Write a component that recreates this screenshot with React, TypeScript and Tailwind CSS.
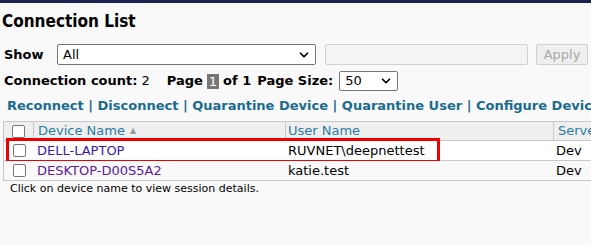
import { ChevronDown } from 'lucide-react';

const font = { fontFamily: '"DejaVu Sans", Verdana, sans-serif' };

function Select({ value, className }: { value: string; className: string }) {
  return (
    <div
      className={`flex items-center justify-between border border-[#767676] rounded-[2px] bg-white pl-[5px] pr-[4px] text-[13px] text-black ${className}`}
    >
      <span>{value}</span>
      <ChevronDown size={14} strokeWidth={3} className="text-black" />
    </div>
  );
}

const rows = [
  { device: 'DELL-LAPTOP', user: 'RUVNET\\deepnettest', server: 'Dev', color: 'text-[#3a17ad]', bg: 'bg-white', hl: true },
  { device: 'DESKTOP-D00S5A2', user: 'katie.test', server: 'Dev', color: 'text-[#5a1a9c]', bg: 'bg-[#f9f9f9]', hl: false },
];

function Check() {
  return <div className="w-[13px] h-[13px] border border-[#767676] rounded-[2px] bg-white" />;
}

export default function App() {
  return (
    <div className="w-[591px] h-[245px] overflow-hidden bg-[#f9f9f9] text-black" style={font}>
      <div className="h-[3px] bg-[#1c2150]" />
      <h1
        className="pl-[2px] pt-[6px] text-[17px] font-bold leading-[24px]"
        style={{ fontFamily: '"DejaVu Sans Condensed", "Liberation Sans", sans-serif' }}
      >
        Connection List
      </h1>

      <div className="flex items-center mt-[11px] h-[21px] pl-[4px]">
        <span className="text-[13px] font-bold w-[53px]">Show</span>
        <Select value="All" className="w-[259px] h-[21px]" />
        <div className="ml-[9px] w-[203px] h-[21px] border border-[#d0d0d0] rounded-[2px] bg-[#f4f4f4]" />
        <div className="ml-[8px] w-[52px] h-[21px] border border-[#d0d0d0] rounded-[2px] bg-[#efefef] text-[13px] text-[#a8a8a8] flex items-center justify-center">
          Apply
        </div>
      </div>

      <div className="flex items-center mt-[6px] h-[20px] pl-[4px] text-[13px]">
        <span className="font-bold">Connection count:</span>
        <span className="ml-[4px]">2</span>
        <span className="ml-[17px] font-bold">Page</span>
        <span className="ml-[4px] bg-[#777] text-white px-[2px] leading-[15px]">1</span>
        <span className="ml-[4px] font-bold">of 1</span>
        <span className="ml-[6px] font-bold">Page Size:</span>
        <Select value="50" className="ml-[6px] w-[59px] h-[20px]" />
      </div>

      <div className="mt-[6px] pl-[7px] text-[13px] font-bold text-[#1a6b8e] whitespace-nowrap leading-[18px]">
        Reconnect | Disconnect | Quarantine Device | Quarantine User | Configure Device
      </div>

      <div className="mt-[6px] ml-[3px] w-[700px] border-l border-t border-[#c8c8c8] text-[13px]">
        <div className="flex h-[19px] bg-[#efefef] border-b border-[#c8c8c8] text-[#2a7ca3]">
          <div className="w-[30px] flex items-center justify-center border-r border-[#c8c8c8]">
            <Check />
          </div>
          <div className="w-[252px] flex items-center pl-[4px] border-r border-[#c8c8c8]">
            Device Name <span className="ml-[5px] text-[8px] text-[#999]">▲</span>
          </div>
          <div className="w-[268px] flex items-center pl-[2px] border-r border-[#c8c8c8]">User Name</div>
          <div className="flex-1 flex items-center pl-[4px]">Server</div>
        </div>
        {rows.map((r) => (
          <div key={r.device} className={`relative flex h-[20px] border-b border-[#c8c8c8] ${r.bg}`}>
            <div className="w-[30px] flex items-center justify-center">
              <Check />
            </div>
            <div className={`w-[252px] flex items-center pl-[3px] ${r.color}`}>{r.device}</div>
            <div className="w-[268px] flex items-center pl-[2px]">{r.user}</div>
            <div className="flex-1 flex items-center pl-[2px]">{r.server}</div>
            {r.hl && (
              <div className="absolute left-[2px] top-[-3px] w-[434px] h-[25px] border-[3px] border-[#ee0000] pointer-events-none" />
            )}
          </div>
        ))}
      </div>
      <div className="pl-[10px] text-[11px] leading-[14px] mt-[1px]">Click on device name to view session details.</div>
    </div>
  );
}
